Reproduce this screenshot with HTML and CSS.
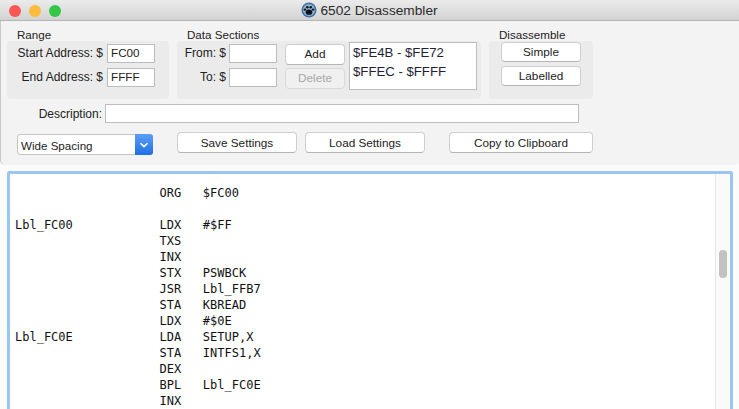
FILE: index.html
```html
<!DOCTYPE html>
<html lang="en">
<head>
<meta charset="utf-8">
<title>6502 Disassembler</title>
<link rel="stylesheet" href="styles.css">
</head>
<body>
<div class="window">
  <header class="titlebar">
    <div class="lights">
      <span class="light red"></span>
      <span class="light yellow"></span>
      <span class="light green"></span>
    </div>
    <div class="title">
      <svg class="paw" width="16" height="16" viewBox="0 0 16 16">
        <circle cx="8" cy="8" r="7.5" fill="#3f6f9f"/>
        <circle cx="8" cy="8" r="6" fill="#8db4d8"/>
        <ellipse cx="8" cy="10.2" rx="3.3" ry="2.6" fill="#111"/>
        <circle cx="3.9" cy="7.6" r="1.2" fill="#111"/>
        <circle cx="6.3" cy="5.2" r="1.3" fill="#111"/>
        <circle cx="9.7" cy="5.2" r="1.3" fill="#111"/>
        <circle cx="12.1" cy="7.6" r="1.2" fill="#111"/>
      </svg>
      <span>6502 Disassembler</span>
    </div>
  </header>

  <section class="controls">
    <div class="groups">
      <div class="group group-range">
        <div class="group-label">Range</div>
        <div class="panel range-panel">
          <label class="field-label">Start Address: $</label><div class="input">FC00</div>
          <label class="field-label">End Address: $</label><div class="input">FFFF</div>
        </div>
      </div>
      <div class="group group-data">
        <div class="group-label">Data Sections</div>
        <div class="panel data-panel">
          <div class="data-fields">
            <label class="field-label">From: $</label><div class="input"></div>
            <div class="btn btn-small">Add</div>
            <label class="field-label">To: $</label><div class="input"></div>
            <div class="btn btn-small btn-disabled">Delete</div>
          </div>
          <div class="listbox">
            <div>$FE4B - $FE72</div>
            <div>$FFEC - $FFFF</div>
          </div>
        </div>
      </div>
      <div class="group group-dis">
        <div class="group-label">Disassemble</div>
        <div class="panel dis-panel">
          <div class="btn btn-dis">Simple</div>
          <div class="btn btn-dis">Labelled</div>
        </div>
      </div>
    </div>

    <div class="desc-row">
      <label class="field-label desc-label">Description:</label>
      <div class="input desc-input"></div>
    </div>

    <div class="action-row">
      <div class="select">
        <span class="select-text">Wide Spacing</span>
        <span class="select-arrow">
          <svg width="10" height="6" viewBox="0 0 10 6"><path d="M1.5 1.2 L5 4.6 L8.5 1.2" fill="none" stroke="#fff" stroke-width="1.5"/></svg>
        </span>
      </div>
      <div class="btn btn-action btn-save">Save Settings</div>
      <div class="btn btn-action btn-load">Load Settings</div>
      <div class="btn btn-action btn-copy">Copy to Clipboard</div>
    </div>
  </section>

  <section class="editor">
    <pre class="code">
                    ORG   $FC00

Lbl_FC00            LDX   #$FF
                    TXS
                    INX
                    STX   PSWBCK
                    JSR   Lbl_FFB7
                    STA   KBREAD
                    LDX   #$0E
Lbl_FC0E            LDA   SETUP,X
                    STA   INTFS1,X
                    DEX
                    BPL   Lbl_FC0E
                    INX</pre>
    <div class="scrollbar"><div class="thumb"></div></div>
  </section>
</div>
</body>
</html>
```
FILE: styles.css
```css
* { box-sizing: border-box; }
html, body { margin: 0; padding: 0; }
body { width: 739px; height: 409px; overflow: hidden; background: #fbfbfb; font-family: "Liberation Sans", Arial, sans-serif; font-size: 12px; color: #222; }
.window { width: 739px; height: 409px; display: flex; flex-direction: column; overflow: hidden; }

.titlebar { height: 21px; flex: none; position: relative; display: flex; align-items: center; justify-content: center; background: linear-gradient(#ebebeb, #d3d3d3); border-bottom: 1px solid #b4b4b4; }
.lights { position: absolute; left: 9px; top: 5px; display: flex; gap: 8px; }
.light { width: 12px; height: 12px; border-radius: 50%; }
.red { background: #fc5753; }
.yellow { background: #fdbc40; }
.green { background: #33c748; }
.title { display: flex; align-items: center; gap: 3px; font-size: 13.7px; color: #2c2c2c; }

.controls { height: 144px; flex: none; background: #f3f3f3; border-left: 1px solid #c8c8c8; border-radius: 0 0 5px 5px; padding: 7px 0 0 6px; }
.groups { display: flex; gap: 8px; }
.group-label { height: 13px; line-height: 13px; padding-left: 10px; font-size: 11.6px; }
.panel { height: 58px; background: #ebebeb; border-radius: 4px; }
.group-range { width: 162px; }
.group-data { width: 304px; }
.group-dis { width: 104px; }

.range-panel { display: grid; grid-template-columns: 96px 48px; column-gap: 4px; row-gap: 5px; padding: 3px 0 0 0; grid-auto-rows: 19px; }
.field-label { text-align: right; line-height: 18px; white-space: nowrap; }
.input { background: #fff; border: 1px solid #bdbdbd; height: 19px; line-height: 16px; padding-left: 3px; font-size: 11.7px; color: #222; }

.data-panel { display: flex; padding: 1px 0 0 0; }
.data-fields { width: 172px; display: grid; grid-template-columns: 49px 48px 60px; column-gap: 3px; grid-auto-rows: 19px; row-gap: 5px; padding-top: 2px; }
.data-fields .btn-small { margin-left: 5px; }
.btn { background: #fff; border: 1px solid #cfcfcf; border-bottom-color: #b5b5b5; border-radius: 4px; text-align: center; white-space: nowrap; font-size: 11.75px; }
.btn-small { width: 60px; height: 21px; line-height: 18px; }
.btn-disabled { background: #f0f0f0; color: #a8a8a8; border-color: #dadada; }
.listbox { width: 128px; height: 48px; background: #fff; border: 1px solid #bdbdbd; padding: 0 3px; font-size: 13.2px; line-height: 19px; color: #1f1f3a; }

.dis-panel { display: flex; flex-direction: column; align-items: center; gap: 4px; padding-top: 1px; }
.btn-dis { width: 80px; height: 20px; line-height: 17px; }

.desc-row { display: flex; margin-top: 5px; gap: 3px; height: 19px; }
.desc-label { width: 95px; line-height: 20px; }
.desc-input { width: 474px; }

.action-row { display: flex; margin-top: 9px; margin-left: 10px; height: 23px; }
.select { width: 136px; height: 21px; margin-top: 2px; background: #fff; border: 1px solid #c4c4c4; border-radius: 3px; display: flex; align-items: center; justify-content: space-between; }
.select-text { padding-left: 3px; padding-top: 1px; font-size: 11.6px; }
.select-arrow { width: 18px; height: 21px; margin: -1px -1px -1px 0; background: linear-gradient(#5c9ff5, #1f6fe6); border-radius: 0 3px 3px 0; display: flex; align-items: center; justify-content: center; }
.btn-action { width: 120px; height: 21px; line-height: 20px; }
.btn-save { margin-left: 24px; }
.btn-load { margin-left: 8px; }
.btn-copy { margin-left: 24px; width: 144px; }

.editor { width: 726px; height: 250px; flex: none; margin: 6px 0 0 7px; background: #fff; border: 3px solid #9ac5f5; border-bottom: none; border-radius: 3px 3px 0 0; display: flex; }
.code { margin: 0; flex: 1; padding: 11px 0 0 5px; font-family: "DejaVu Sans Mono", "Liberation Mono", monospace; font-size: 12px; line-height: 16px; color: #111; overflow: hidden; }
.scrollbar { width: 15px; flex: none; background: #fafafa; border-left: 1px solid #e6e6e6; padding: 76px 0 0 3px; }
.thumb { width: 8px; height: 28px; background: #c2c2c2; border-radius: 4px; }
```
